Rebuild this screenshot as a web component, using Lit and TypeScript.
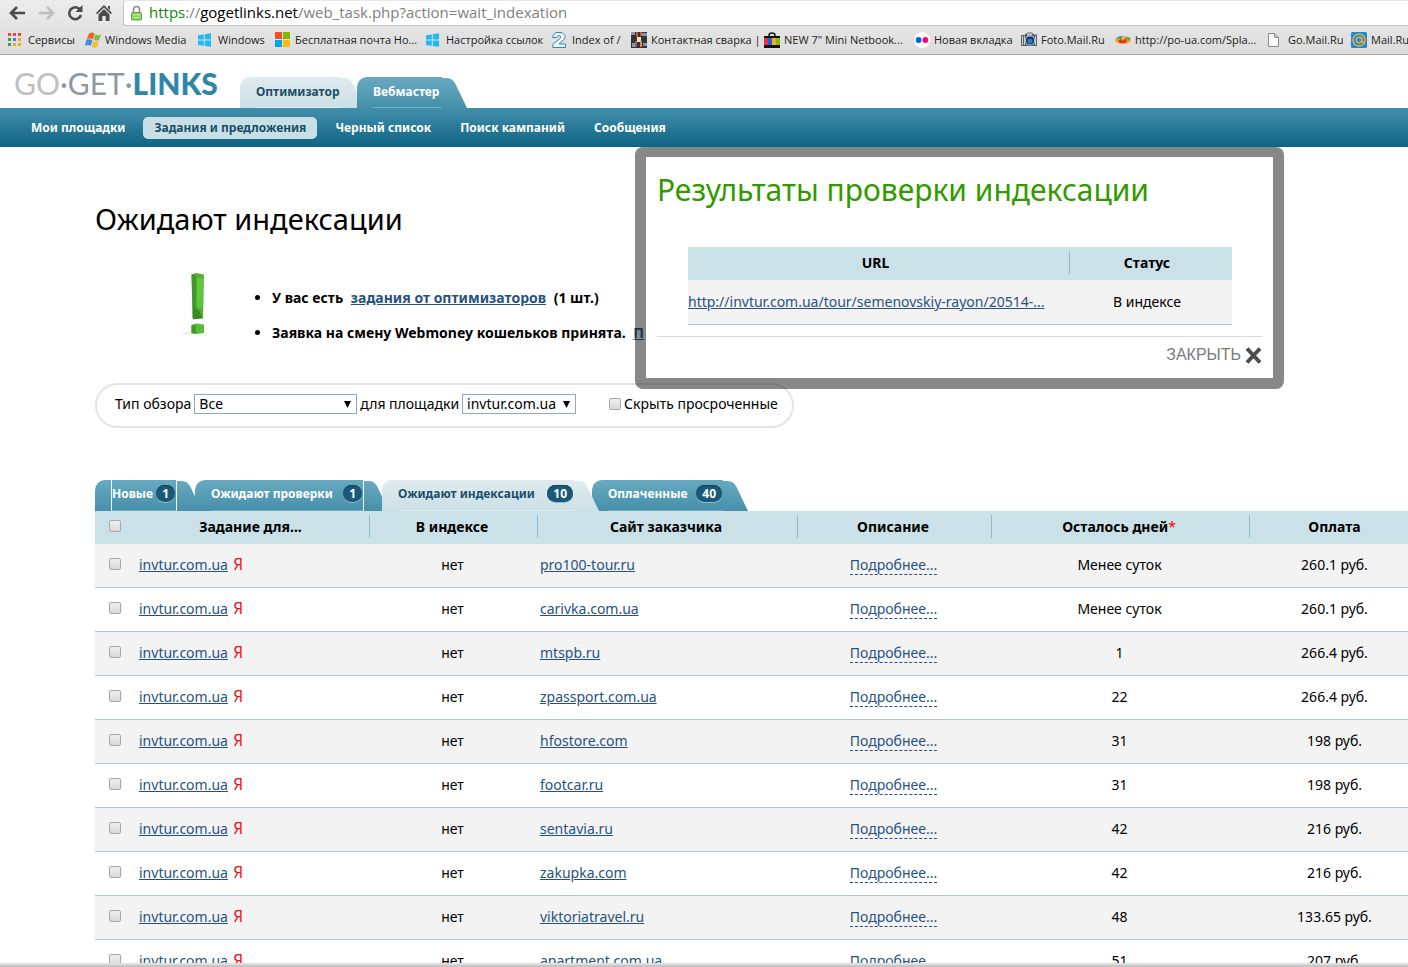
import { LitElement, html, css, svg, nothing } from "lit";
import { customElement, property } from "lit/decorators.js";
import { classMap } from "lit/directives/class-map.js";

const windowsIcon = svg`<path fill="#1fb9f5" d="M0 3.2 5.8 2.4V7.6H0zM6.8 2.2 13 1.3V7.6H6.8zM0 8.6H5.8V13.8L0 13zM6.8 8.6H13V14.8L6.8 13.9z"/>`;

const icons: Record<string, unknown> = {
  apps: svg`
    <path fill="#e8453c" d="M0 1h3v3H0zM5 1h3v3H5zM10 1h3v3h-3z"/>
    <path fill="#2fa455" d="M0 6h3v3H0z"/><path fill="#3f80e8" d="M5 6h3v3H5z"/>
    <path fill="#f0ab1d" d="M10 6h3v3h-3zM5 11h3v3H5zM10 11h3v3h-3z"/><path fill="#2fa455" d="M0 11h3v3H0z"/>`,
  flag: svg`
    <path fill="#e9632b" d="M4 1.500Q7-.5 9.500 1.500L8 7.500Q5 5.500 1.500 7.500z"/>
    <path fill="#7fbf3f" d="M10.300 2Q13 4 16 2.500L14 8.300Q11 9.500 8.700 7.800z"/>
    <path fill="#3f8ee0" d="M1.200 8.300Q4 6.300 7.400 8.300L5.800 14Q3 12 0 14z"/>
    <path fill="#f6bd2c" d="M8.300 8.800Q11 10.500 13.800 9.200L12 15Q9 16.500 6.700 14.600z"/>`,
  windows: windowsIcon,
  ms: svg`<path fill="#f25022" d="M0 0h7v7H0z"/><path fill="#7fba00" d="M8 0h7v7H8z"/><path fill="#00a4ef" d="M0 8h7v7H0z"/><path fill="#ffb900" d="M8 8h7v7H8z"/>`,
  two: svg`<path fill="#f4f9fc" stroke="#2a86c6" d="M.800 5.500V3.500L4 .5h6l3 3v3L7 12h6.500v3.500H.8v-3L8.500 6V4.500L7.500 3.800H6L4.800 5.500z"/>`,
  weld: svg`
    <path fill="#2c3440" d="M0 0h16v16H0z"/><path fill="#8796a8" d="M0 0h4v3H0zM11 1h5v3h-5zM1 11h4v4H1zM12 11h4v3h-4z"/>
    <path fill="#c65a2c" d="M5 0h2v5H5zM9 0h2v4H9zM4 9h2v5H4z"/><path fill="#f3dfc8" d="M6 5h4v5H6z"/><path fill="#e6873f" d="M9 9h2v6H9z"/>`,
  bag: svg`
    <path fill="none" stroke="#222" stroke-width="1.600" d="M5 5V3.500Q5 1 8 1t3 2.500V5"/>
    <path fill="#111" d="M0 4h16v12H0z"/><path fill="#e8333c" d="M0 6h4v7H0z"/><path fill="#1463dc" d="M4 6h4v7H4z"/>
    <path fill="#f5af12" d="M8 6h4v7H8z"/><path fill="#86b817" d="M12 6h4v7h-4z"/>`,
  flickr: svg`<circle cx="8" cy="8" r="8" fill="#fff"/><circle cx="4.600" cy="8" r="2.900" fill="#0063dc"/><circle cx="11.400" cy="8" r="2.900" fill="#ff0084"/>`,
  camera: svg`
    <path fill="#5a626c" d="M0 3h4V2l3-1.500h4L13 2.500h3V14H0z"/><path fill="#c6cbd1" d="M1 4h1v9H1zM3 4h1v9H3zM6 1.500h5v2H6zM14 4h1v9h-1z"/>
    <circle cx="9" cy="8.500" r="5" fill="#c3c9d0"/><circle cx="9" cy="8.500" r="4" fill="#12294f"/><circle cx="9" cy="9" r="2.600" fill="#2d7be0"/>`,
  splash: svg`
    <ellipse cx="8" cy="8" rx="8" ry="4" fill="#f3a51f"/><path fill="#22a5c8" d="M1 7Q4 2.500 8 4.500L6 7zM12 5l3.500 1-1 2-3-1z"/>
    <path fill="#d8342a" d="M3 9l3-2 2 2 3-3 1 3-2 2H5z"/><path fill="#f8df45" d="M7 4.500l2 .5-1 2.500z"/>`,
  page: svg`<path fill="#fafafa" stroke="#8c8c8c" d="M.500 1.500h6l4 4v9H.500zM6.500 1.500v4h4"/>`,
  mail: svg`
    <rect width="16" height="16" rx="1.500" fill="#168de2"/><circle cx="8" cy="8" r="6" fill="none" stroke="#f7a92d" stroke-width="1.500"/>
    <circle cx="8" cy="8" r="2.700" fill="none" stroke="#f7a92d" stroke-width="1.500"/><path fill="none" stroke="#f7a92d" stroke-width="1.500" d="M10.800 5.500V9q.5 2 2.500 1"/>`,
};

const bookmarks: [string, string][] = [
  ["apps", "Сервисы"],
  ["flag", "Windows Media"],
  ["windows", "Windows"],
  ["ms", "Бесплатная почта Но..."],
  ["windows", "Настройка ссылок"],
  ["two", "Index of /"],
  ["weld", "Контактная сварка |"],
  ["bag", "NEW 7\" Mini Netbook..."],
  ["flickr", "Новая вкладка"],
  ["camera", "Foto.Mail.Ru"],
  ["splash", "http://po-ua.com/Spla..."],
  ["page", "Go.Mail.Ru"],
  ["mail", "Mail.Ru"],
];

const menu = ["Мои площадки", "Задания и предложения", "Черный список", "Поиск кампаний", "Сообщения"];

const tasks: [string, string, string][] = [
  ["pro100-tour.ru", "Менее суток", "260.1 руб."],
  ["carivka.com.ua", "Менее суток", "260.1 руб."],
  ["mtspb.ru", "1", "266.4 руб."],
  ["zpassport.com.ua", "22", "266.4 руб."],
  ["hfostore.com", "31", "198 руб."],
  ["footcar.ru", "31", "198 руб."],
  ["sentavia.ru", "42", "216 руб."],
  ["zakupka.com", "42", "216 руб."],
  ["viktoriatravel.ru", "48", "133.65 руб."],
  ["apartment.com.ua", "51", "207 руб."],
];

@customElement("browser-bar")
class BrowserBar extends LitElement {
  static styles = css`
    :host { display: block; font-family: "Open Sans", "Noto Sans", sans-serif; background: linear-gradient(#ececec, #dcdcdc); border-bottom: 1px solid #a5a5a5; }
    .top { display: flex; align-items: stretch; height: 26px; }
    .buttons { display: flex; align-items: center; gap: 11px; padding: 0 10px 0 8px; }
    .tool { border: 0; padding: 0; background: none; width: 18px; height: 18px; display: block; }
    .address { flex: 1; min-width: 0; display: flex; align-items: center; gap: 6px; padding-left: 6px; background: #fff; border: 1px solid #c4c4c4; border-right: 0; border-top-color: #e6e6e6; border-radius: 3px 0 0 3px; font-size: 15px; line-height: 20px; color: #808080; white-space: nowrap; }
    .url { padding-bottom: 2px; }
    .safe { color: #118511; }
    .domain { color: #000; }
    .marks { display: grid; grid-template-columns: 77px 113px 77px 151px 126px 79px 133px 150px 107px 94px 153px 83px auto; height: 28px; padding-left: 8px; align-items: center; overflow: hidden; }
    .mark { display: flex; align-items: center; gap: 4px; color: #1c1c1c; font-size: 11px; line-height: 16px; text-decoration: none; white-space: nowrap; }
    .icon { flex: none; width: 16px; height: 16px; }
  `;
  render() {
    return html`
      <div class="top">
        <div class="buttons">
          <button class="tool" aria-label="Назад"><svg width="18" height="18" viewBox="0 0 18 18"><path d="M17 9H4M9 3 3 9l6 6" fill="none" stroke="#4b4b4b" stroke-width="2.600"/></svg></button>
          <button class="tool" aria-label="Вперед"><svg width="18" height="18" viewBox="0 0 18 18"><path d="M2 9h13M10 3l6 6-6 6" fill="none" stroke="#bdbdbd" stroke-width="2.600"/></svg></button>
          <button class="tool" aria-label="Обновить"><svg width="18" height="18" viewBox="0 0 18 18"><path d="M14 5.500A6 6 0 1 0 15 11" fill="none" stroke="#4b4b4b" stroke-width="2.600"/><path d="M16.500 1v7H9.500z" fill="#4b4b4b"/></svg></button>
          <button class="tool" aria-label="Домой"><svg width="18" height="18" viewBox="0 0 18 18"><path d="M9 1 17 9l-1.200 1.200L9 3.500 2.200 10.200 1 9zM13 2h2v4l-2-2z" fill="#4b4b4b"/><path d="M9 5l5.500 5.500V17h-3.800v-5H7.300v5H3.500v-6.500z" fill="#4b4b4b"/></svg></button>
        </div>
        <div class="address">
          <svg width="13" height="16" viewBox="0 0 13 16"><path d="M3.500 8V4.500a3 3 0 0 1 6 0V8" fill="none" stroke="#8d8d8d" stroke-width="1.600"/><rect x="1.500" y="7.500" width="10" height="7.500" rx="1" fill="#93d36b" stroke="#5c9a3c"/><path d="M2.500 10h8M2.500 12.500h8" stroke="#b9e69c"/></svg>
          <span class="url"><span class="safe">https</span>://<span class="domain">gogetlinks.net</span>/web_task.php?action=wait_indexation</span>
        </div>
      </div>
      <nav class="marks">
        ${bookmarks.map(([icon, name]) => html`<a class="mark" href="#"><svg class="icon" viewBox="0 0 16 16">${icons[icon]}</svg><span>${name}</span></a>`)}
      </nav>`;
  }
}

@customElement("tab-link")
class TabLink extends LitElement {
  static styles = css`
    :host { display: block; }
    .tab { display: flex; height: 31px; font: bold 12px/28px "Noto Sans", sans-serif; color: #fff; text-decoration: none; white-space: nowrap; }
    .lead { flex: none; width: 16px; border-radius: 10px 0 0 0; background: linear-gradient(#68a9c1, #4690aa); }
    .body { flex: 1; display: flex; align-items: center; box-sizing: border-box; padding-bottom: 3px; background: linear-gradient(#68a9c1, #4690aa); border-bottom: 1px solid #6fb0c6; }
    .body.plain { padding-bottom: 0; }
    .cap { flex: none; width: 25px; margin: 1px -7px 0 0; background: linear-gradient(#68a9c1, #4690aa); clip-path: path("M0 0H5Q11 0 14 7L25 30H0z"); }
    .light { color: #1a4e68; }
    .light .lead, .light .body, .light .cap { background: linear-gradient(#dfebef, #cbe0e6); }
    .light .body { border-color: #e0edf1; }
    .seam-start .body { border-left: 1px solid #fff; }
    .seam-end .body { border-right: 1px solid #fff; }
    .badge { margin: 0 1px 0 auto; padding: 0 6px; height: 17px; line-height: 17px; border-radius: 9px; text-align: center; color: #fff; background: #1a5a78; box-shadow: 0 1px 0 #8fc0d0, inset 0 1px 1px #123f55; }
  `;
  @property() label = "";
  @property() count = "";
  @property({ type: Boolean }) light = false;
  @property() seam = "";
  render() {
    const classes = { tab: true, light: this.light, "seam-start": this.seam === "both", "seam-end": this.seam !== "" };
    return html`<a class=${classMap(classes)} href="#"><span class="lead"></span><span class="body ${this.count ? "" : "plain"}">${this.label}
      ${this.count ? html`<span class="badge">${this.count}</span>` : nothing}</span><span class="cap"></span></a>`;
  }
}

@customElement("index-results")
class IndexResults extends LitElement {
  static styles = css`
    :host { display: block; box-sizing: border-box; width: 649px; padding: 10px 11px 11px; border-radius: 8px; background: rgba(18, 18, 18, 0.5); font: 14px/20px "Noto Sans", sans-serif; }
    .sheet { background: #fff; padding: 11px; }
    .title { margin: 0; font-size: 30px; line-height: 44px; font-weight: 400; color: #329a00; white-space: nowrap; }
    .wrap { padding: 35px 30px 11px 31px; }
    .grid { width: 100%; border-collapse: collapse; table-layout: fixed; }
    .grid th { height: 31px; padding: 0 0 2px; background: #cae1e7; font-size: 14px; }
    .grid td { height: 44px; padding: 0; background: #f3f3f3; border-bottom: 1px solid #b5c9d4; white-space: nowrap; }
    .url { width: 382px; }
    .split { display: block; line-height: 23px; padding-right: 6px; border-right: 1px solid #8dbbce; }
    .grid .mid { text-align: center; padding-right: 8px; }
    .ref { color: #27527f; }
    .foot { display: flex; justify-content: flex-end; border-top: 1px solid #d9d9d9; padding: 7px 0 1px; }
    .close { display: flex; align-items: center; gap: 4px; padding: 0; border: 0; background: none; color: #7a7a7a; font: 16px/22px "Liberation Sans", sans-serif; }
  `;
  render() {
    return html`<section class="sheet">
      <h2 class="title">Результаты проверки индексации</h2>
      <div class="wrap"><table class="grid">
        <thead><tr><th class="url"><span class="split">URL</span></th><th class="mid">Статус</th></tr></thead>
        <tbody><tr><td><a class="ref" href="#">http://invtur.com.ua/tour/semenovskiy-rayon/20514-...</a></td><td class="mid">В индексе</td></tr></tbody>
      </table></div>
      <div class="foot"><button class="close">ЗАКРЫТЬ <svg width="17" height="17" viewBox="0 0 17 17"><path d="M2 1.500 15 15.500M15 1.500 2 15.500" stroke="#4d4d4d" stroke-width="4"/></svg></button></div>
    </section>`;
  }
}

@customElement("app-root")
class AppRoot extends LitElement {
  static styles = css`
    :host { display: flex; flex-direction: column; height: 100vh; overflow: hidden; background: #fff; color: #000; font: 14px/20px "Noto Sans", sans-serif; }
    browser-bar { flex: none; }
    .page { flex: 1; min-height: 0; overflow: hidden; }
    .head { display: flex; align-items: flex-end; height: 53px; padding-left: 14px; }
    .logo { display: flex; align-items: center; width: 226px; height: 50px; font: 400 30px/50px "Lato", sans-serif; color: #bcc0c3; text-decoration: none; }
    .get { color: #8d989f; }
    .links { font-weight: 900; color: #2e86ab; }
    .tabs { display: grid; isolation: isolate; }
    .tabs tab-link { position: relative; }
    .under { z-index: 1; }
    .over { z-index: 2; }
    .roles { grid-template-columns: 117px 103px; }
    .states { grid-template-columns: 100px 187px 210px 149px; }
    .menu { display: flex; align-items: center; gap: 7px; height: 39px; padding-left: 20px; background: linear-gradient(#438fab, #0f6484); }
    .item { padding: 0 11px; border-radius: 5px; font-weight: 700; font-size: 12px; line-height: 22px; color: #fff; text-decoration: none; white-space: nowrap; }
    .item.on { background: #c8dfe6; color: #1a4e68; }
    .content { position: relative; padding: 50px 0 0 95px; }
    .popup { position: absolute; left: 635px; top: 0; z-index: 5; }
    .title { margin: 0; font-size: 29px; line-height: 44px; font-weight: 400; }
    .notice { display: flex; gap: 26px; padding: 31px 0 0 86px; height: 111px; }
    .list { margin: 0; padding: 8px 0 0 35px; font-weight: 700; line-height: 35px; white-space: nowrap; }
    .list .ref { margin: 0 4px; }
    .ref { color: #27527f; }
    .filter { display: flex; align-items: center; width: 699px; height: 45px; box-sizing: border-box; padding: 0 18px 3px; border: 2px solid #e4e4e4; border-radius: 23px; gap: 3px; white-space: nowrap; }
    .pick { appearance: none; flex: none; height: 20px; box-sizing: border-box; margin: 0; padding: 0 18px 0 4px; border: 1px solid #8fa8c4; border-radius: 0; font: 14px/18px "Noto Sans", sans-serif; color: #000; background: #fff url("data:image/svg+xml,%3Csvg xmlns='http://www.w3.org/2000/svg' width='7' height='7'%3E%3Cpath d='M0 0h7L3.500 7z'/%3E%3C/svg%3E") no-repeat right 5px center; }
    .wide { width: 163px; }
    .narrow { width: 114px; }
    .check { appearance: none; display: block; flex: none; width: 12px; height: 12px; margin: 0; border: 1px solid #a9a9a9; border-radius: 2px; background: linear-gradient(#efefef, #d9d9d9); }
    .filter .check { margin-left: 30px; }
    .sections { padding-top: 52px; }
    .grid { width: 100%; border-collapse: collapse; table-layout: fixed; }
    .grid th { height: 31px; padding: 0 0 2px; background: #cae1e7; }
    .grid td { height: 41px; padding: 0 3px 2px 0; border-bottom: 1px solid #b5c5d2; text-align: center; white-space: nowrap; }
    .grid tr:nth-child(odd) td { background: #f3f3f3; }
    .grid .left { text-align: left; padding-left: 4px; }
    .grid .site { text-align: left; padding-left: 2px; }
    .grid .last { padding-left: 11px; padding-right: 0; }
    .grid .check { margin: 0 0 2px 14px; }
    .split { display: block; line-height: 23px; padding-right: 3px; border-right: 1px solid #8dbbce; }
    .ya { margin-left: 5px; color: #f01818; font: 16px/16px "Liberation Sans Narrow", "DejaVu Sans Condensed", sans-serif; }
    .more { color: #27527f; text-decoration: none; border-bottom: 1px dashed #27527f; line-height: 18px; }
    .star { color: #f00; font-weight: 400; }
    .c1 { width: 40px; } .c2 { width: 235px; } .c3 { width: 168px; } .c4 { width: 260px; } .c5 { width: 194px; } .c6 { width: 258px; }
    .task { flex: none; height: 2px; background: #c6c6c6; border-top: 2px solid #dedede; }
  `;
  render() {
    return html`
      <browser-bar></browser-bar>
      <div class="page">
        <header class="head">
          <a class="logo" href="#"><span>GO</span><span class="get">·GET·</span><span class="links">LINKS</span></a>
          <div class="tabs roles"><tab-link class="under" label="Оптимизатор" light></tab-link><tab-link class="over" label="Вебмастер"></tab-link></div>
        </header>
        <nav class="menu">${menu.map((name, i) => html`<a class=${classMap({ item: true, on: i === 1 })} href="#">${name}</a>`)}</nav>
        <main class="content">
          <index-results class="popup"></index-results>
          <h1 class="title">Ожидают индексации</h1>
          <div class="notice">
            <svg width="30" height="66" viewBox="0 0 30 66">
              <path d="M0 61 14 58V62L4 63z" fill="#f3efe8"/>
              <path d="M10.500 2.500 15 1l8 1.500-1 44-9.500 1z" fill="#55b135"/><path d="M10.500 2.500 15 3v44l-3.500-.5z" fill="#43962b"/>
              <path d="M16 6h6l-.5 30-5.500-1z" fill="#5fc63d"/><path d="M12 35q7 2 9.500 11l-9.500 1z" fill="#3a8a24"/>
              <path d="M10.500 53 15 51.500l8 1V61l-8 1-4.500-1z" fill="#55bd36"/><path d="M10.500 53 15 54v8l-4.500-1z" fill="#3f9b29"/>
            </svg>
            <ul class="list">
              <li>У вас есть <a class="ref" href="#">задания от оптимизаторов</a> (1 шт.)</li>
              <li>Заявка на смену Webmoney кошельков принята. <a class="ref" href="#">П</a></li>
            </ul>
          </div>
          <form class="filter">
            <label for="kind">Тип обзора</label>
            <select class="pick wide" id="kind"><option>Все</option></select>
            <label for="site">для площадки</label>
            <select class="pick narrow" id="site"><option>invtur.com.ua</option></select>
            <input class="check" type="checkbox" id="hide"><label for="hide">Скрыть просроченные</label>
          </form>
          <section class="sections">
            <div class="tabs states">
              <tab-link class="under" label="Новые" count="1" seam="both"></tab-link>
              <tab-link class="under" label="Ожидают проверки" count="1" seam="end"></tab-link>
              <tab-link class="over" label="Ожидают индексации" count="10" light></tab-link>
              <tab-link class="under" label="Оплаченные" count="40"></tab-link>
            </div>
            <table class="grid">
              <colgroup><col class="c1"><col class="c2"><col class="c3"><col class="c4"><col class="c5"><col class="c6"><col></colgroup>
              <thead><tr>
                <th><input class="check" type="checkbox" aria-label="Выбрать все"></th>
                <th><span class="split">Задание для...</span></th>
                <th><span class="split">В индексе</span></th>
                <th><span class="split">Сайт заказчика</span></th>
                <th><span class="split">Описание</span></th>
                <th><span class="split">Осталось дней<span class="star">*</span></span></th>
                <th class="last">Оплата</th>
              </tr></thead>
              <tbody>${tasks.map(([site, days, pay]) => html`<tr>
                <td><input class="check" type="checkbox" aria-label=${site}></td>
                <td class="left"><a class="ref" href="#">invtur.com.ua</a><span class="ya">Я</span></td>
                <td>нет</td>
                <td class="site"><a class="ref" href="#">${site}</a></td>
                <td><a class="more" href="#">Подробнее...</a></td>
                <td>${days}</td>
                <td class="last">${pay}</td>
              </tr>`)}</tbody>
            </table>
          </section>
        </main>
      </div>
      <footer class="task"></footer>`;
  }
}
